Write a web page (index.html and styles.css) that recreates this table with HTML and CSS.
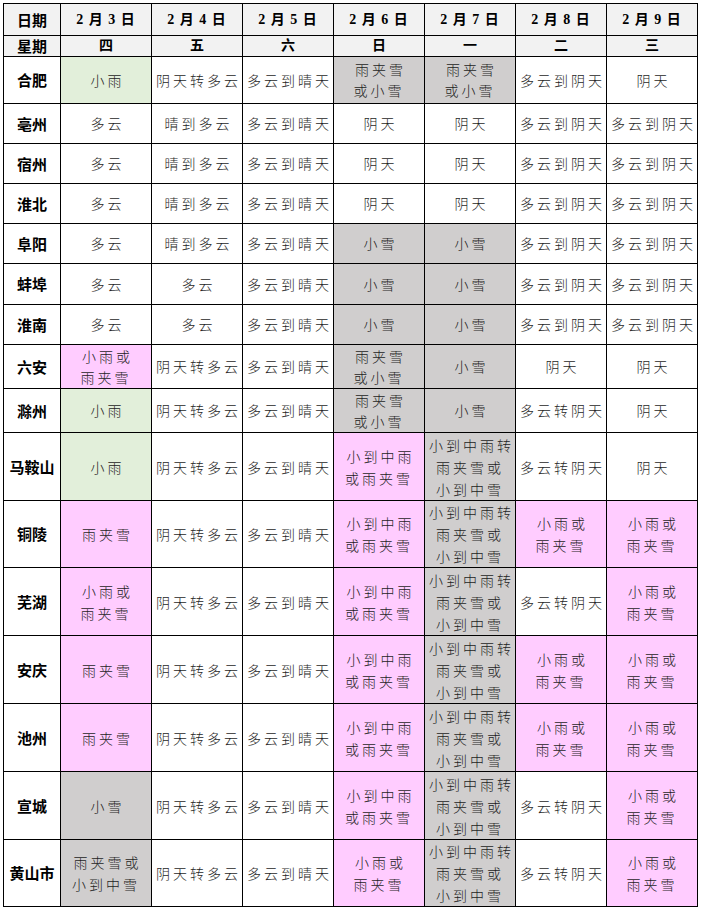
FILE: index.html
```html
<!DOCTYPE html>
<html lang="zh-CN">
<head>
<meta charset="utf-8">
<title>安徽各市天气预报</title>
<link rel="stylesheet" href="styles.css">
</head>
<body>
<table class="wx">
  <colgroup>
    <col class="c-city">
    <col class="c-day"><col class="c-day"><col class="c-day"><col class="c-day"><col class="c-day"><col class="c-day"><col class="c-day">
  </colgroup>
  <tbody>
    <tr class="r-h1 head">
      <th>日期</th><th>2 月 3 日</th><th>2 月 4 日</th><th>2 月 5 日</th><th>2 月 6 日</th><th>2 月 7 日</th><th>2 月 8 日</th><th>2 月 9 日</th>
    </tr>
    <tr class="r-h2 head">
      <th>星期</th><th>四</th><th>五</th><th>六</th><th>日</th><th>一</th><th>二</th><th>三</th>
    </tr>
    <tr class="r-47">
      <th>合肥</th><td class="green">小雨</td><td>阴天转多云</td><td>多云到晴天</td><td class="gray">雨夹雪<br>或小雪</td><td class="gray">雨夹雪<br>或小雪</td><td>多云到阴天</td><td>阴天</td>
    </tr>
    <tr class="r-40">
      <th>亳州</th><td>多云</td><td>晴到多云</td><td>多云到晴天</td><td>阴天</td><td>阴天</td><td>多云到阴天</td><td>多云到阴天</td>
    </tr>
    <tr class="r-40">
      <th>宿州</th><td>多云</td><td>晴到多云</td><td>多云到晴天</td><td>阴天</td><td>阴天</td><td>多云到阴天</td><td>多云到阴天</td>
    </tr>
    <tr class="r-40">
      <th>淮北</th><td>多云</td><td>晴到多云</td><td>多云到晴天</td><td>阴天</td><td>阴天</td><td>多云到阴天</td><td>多云到阴天</td>
    </tr>
    <tr class="r-40">
      <th>阜阳</th><td>多云</td><td>晴到多云</td><td>多云到晴天</td><td class="gray">小雪</td><td class="gray">小雪</td><td>多云到阴天</td><td>多云到阴天</td>
    </tr>
    <tr class="r-41">
      <th>蚌埠</th><td>多云</td><td>多云</td><td>多云到晴天</td><td class="gray">小雪</td><td class="gray">小雪</td><td>多云到阴天</td><td>多云到阴天</td>
    </tr>
    <tr class="r-40">
      <th>淮南</th><td>多云</td><td>多云</td><td>多云到晴天</td><td class="gray">小雪</td><td class="gray">小雪</td><td>多云到阴天</td><td>多云到阴天</td>
    </tr>
    <tr class="r-44">
      <th>六安</th><td class="pink">小雨或<br>雨夹雪</td><td>阴天转多云</td><td>多云到晴天</td><td class="gray">雨夹雪<br>或小雪</td><td class="gray">小雪</td><td>阴天</td><td>阴天</td>
    </tr>
    <tr class="r-44">
      <th>滁州</th><td class="green">小雨</td><td>阴天转多云</td><td>多云到晴天</td><td class="gray">雨夹雪<br>或小雪</td><td class="gray">小雪</td><td>多云转阴天</td><td>阴天</td>
    </tr>
    <tr class="r-68">
      <th>马鞍山</th><td class="green">小雨</td><td>阴天转多云</td><td>多云到晴天</td><td class="pink">小到中雨<br>或雨夹雪</td><td class="gray">小到中雨转<br>雨夹雪或<br>小到中雪</td><td>多云转阴天</td><td>阴天</td>
    </tr>
    <tr class="r-67">
      <th>铜陵</th><td class="pink">雨夹雪</td><td>阴天转多云</td><td>多云到晴天</td><td class="pink">小到中雨<br>或雨夹雪</td><td class="gray">小到中雨转<br>雨夹雪或<br>小到中雪</td><td class="pink">小雨或<br>雨夹雪</td><td class="pink">小雨或<br>雨夹雪</td>
    </tr>
    <tr class="r-68">
      <th>芜湖</th><td class="pink">小雨或<br>雨夹雪</td><td>阴天转多云</td><td>多云到晴天</td><td class="pink">小到中雨<br>或雨夹雪</td><td class="gray">小到中雨转<br>雨夹雪或<br>小到中雪</td><td>多云转阴天</td><td class="pink">小雨或<br>雨夹雪</td>
    </tr>
    <tr class="r-68">
      <th>安庆</th><td class="pink">雨夹雪</td><td>阴天转多云</td><td>多云到晴天</td><td class="pink">小到中雨<br>或雨夹雪</td><td class="gray">小到中雨转<br>雨夹雪或<br>小到中雪</td><td class="pink">小雨或<br>雨夹雪</td><td class="pink">小雨或<br>雨夹雪</td>
    </tr>
    <tr class="r-68">
      <th>池州</th><td class="pink">雨夹雪</td><td>阴天转多云</td><td>多云到晴天</td><td class="pink">小到中雨<br>或雨夹雪</td><td class="gray">小到中雨转<br>雨夹雪或<br>小到中雪</td><td class="pink">小雨或<br>雨夹雪</td><td class="pink">小雨或<br>雨夹雪</td>
    </tr>
    <tr class="r-68">
      <th>宣城</th><td class="gray">小雪</td><td>阴天转多云</td><td>多云到晴天</td><td class="pink">小到中雨<br>或雨夹雪</td><td class="gray">小到中雨转<br>雨夹雪或<br>小到中雪</td><td>多云转阴天</td><td class="pink">小雨或<br>雨夹雪</td>
    </tr>
    <tr class="r-67">
      <th>黄山市</th><td class="gray">雨夹雪或<br>小到中雪</td><td>阴天转多云</td><td>多云到晴天</td><td class="pink">小雨或<br>雨夹雪</td><td class="gray">小到中雨转<br>雨夹雪或<br>小到中雪</td><td>多云转阴天</td><td class="pink">小雨或<br>雨夹雪</td>
    </tr>
  </tbody>
</table>
</body>
</html>
```
FILE: styles.css
```css
html, body {
  margin: 0;
  padding: 0;
  background: #ffffff;
}

body {
  padding: 3px 0 0 3px;
}

.wx {
  border-collapse: collapse;
  table-layout: fixed;
  width: 695px;
  font-family: "Noto Sans CJK SC", "Noto Sans", sans-serif;
}

.c-city { width: 57px; }
.c-day { width: 91px; }

.wx th,
.wx td {
  border: 1px solid #000;
  padding: 0;
  text-align: center;
  vertical-align: middle;
  overflow: hidden;
  white-space: nowrap;
}

.wx td {
  font-size: 14px;
  font-weight: 300;
  line-height: 21px;
  letter-spacing: 3px;
  text-indent: 3px;
  color: #1e1e1e;
}

.wx .r-67 td,
.wx .r-68 td {
  line-height: 22px;
}

.wx th {
  font-size: 15px;
  font-weight: 700;
  line-height: 16px;
  color: #000;
}

.head th {
  background: #f2f2f2;
  font-family: "Liberation Serif", "Noto Sans CJK SC", serif;
  font-size: 14px;
  line-height: 14px;
}

.r-h1 th:not(:first-child) {
  letter-spacing: 1px;
}

.r-h1 th:first-child,
.r-h2 th:first-child {
  font-family: "Noto Sans CJK SC", sans-serif;
  font-size: 15px;
}

.r-h1 { height: 32px; }
.r-h2 { height: 21px; }
.r-47 { height: 47px; }
.r-40 { height: 40px; }
.r-41 { height: 41px; }
.r-44 { height: 44px; }
.r-67 { height: 67px; }
.r-68 { height: 68px; }

.green { background: #e2efda; }
.pink { background: #ffccff; }
.gray { background: #d0cece; }
```
